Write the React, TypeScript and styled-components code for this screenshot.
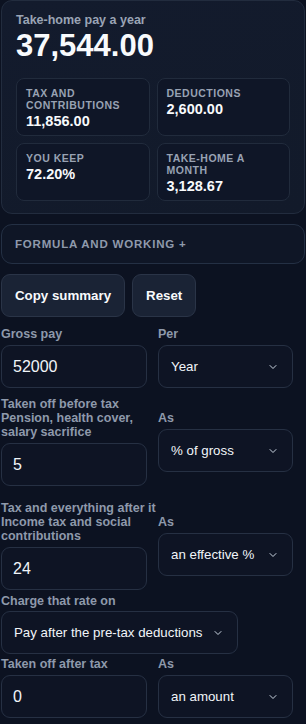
import React from 'react'
import styled, { createGlobalStyle } from 'styled-components'
import { ChevronDown } from 'lucide-react'

const GlobalStyle = createGlobalStyle`
  html, body {
    margin: 0;
    padding: 0;
    background: #0c1221;
  }
  body {
    font-family: "Liberation Sans", Arial, sans-serif;
    color: #f1f5f9;
  }
`

const stats = [
  { label: 'Tax and contributions', value: '11,856.00' },
  { label: 'Deductions', value: '2,600.00' },
  { label: 'You keep', value: '72.20%' },
  { label: 'Take-home a month', value: '3,128.67' },
]

const Select = ({ options, wide }: { options: string[]; wide?: boolean }) => (
  <SelectWrap $wide={wide}>
    <NativeSelect defaultValue={options[0]}>
      {options.map((o) => (
        <option key={o}>{o}</option>
      ))}
    </NativeSelect>
    <Chevron>
      <ChevronDown size={12} strokeWidth={2} />
    </Chevron>
  </SelectWrap>
)

const App = () => {
  return (
    <Page>
      <GlobalStyle />
      <Summary>
        <SummaryTitle>Take-home pay a year</SummaryTitle>
        <BigNumber>37,544.00</BigNumber>
        <StatGrid>
          {stats.map((s) => (
            <Stat key={s.label}>
              <StatLabel>{s.label}</StatLabel>
              <StatValue>{s.value}</StatValue>
            </Stat>
          ))}
        </StatGrid>
      </Summary>

      <Formula>Formula and working +</Formula>

      <Actions>
        <Button>Copy summary</Button>
        <Button>Reset</Button>
      </Actions>

      <Row $top={10}>
        <Field>
          <Label>Gross pay</Label>
          <Input defaultValue="52000" />
        </Field>
        <Field>
          <Label>Per</Label>
          <Select options={['Year', 'Month', 'Week', 'Hour']} />
        </Field>
      </Row>

      <Row $top={9}>
        <Field>
          <Label>
            <Title>Taken off before tax</Title>
            Pension, health cover, salary sacrifice
          </Label>
          <Input defaultValue="5" />
        </Field>
        <Field>
          <Label>As</Label>
          <Select options={['% of gross', 'an amount']} />
        </Field>
      </Row>

      <Row $top={15}>
        <Field>
          <Label>
            <Title>Tax and everything after it</Title>
            Income tax and social contributions
          </Label>
          <Input defaultValue="24" />
        </Field>
        <Field>
          <Label>As</Label>
          <Select options={['an effective %', 'an amount']} />
        </Field>
      </Row>

      <Single $top={4}>
        <Label>Charge that rate on</Label>
        <Select wide options={['Pay after the pre-tax deductions', 'Gross pay']} />
      </Single>

      <Row $top={3}>
        <Field>
          <Label>Taken off after tax</Label>
          <Input defaultValue="0" />
        </Field>
        <Field>
          <Label>As</Label>
          <Select options={['an amount', '% of gross']} />
        </Field>
      </Row>
    </Page>
  )
}
export default App

const Page = styled.div`
  padding: 0 1px 8px;
`

const Summary = styled.section`
  box-sizing: border-box;
  width: 304px;
  padding: 11px 14px 12px;
  border: 1px solid #222c3e;
  border-radius: 11px;
  background: linear-gradient(160deg, #131b2d 0%, #121a2a 100%);
`

const SummaryTitle = styled.div`
  font-size: 12.5px;
  line-height: 16px;
  font-weight: 700;
  color: #9aa4b5;
`

const BigNumber = styled.div`
  margin-top: 1px;
  font-size: 31px;
  line-height: 34px;
  font-weight: 700;
  color: #f8fafc;
`

const StatGrid = styled.div`
  display: grid;
  grid-template-columns: 1fr 1fr;
  gap: 7px;
  margin-top: 15px;
`

const Stat = styled.div`
  box-sizing: border-box;
  min-height: 58px;
  padding: 8px 9px 5px;
  border: 1px solid #212b3c;
  border-radius: 8px;
  background: #0f1627;
`

const StatLabel = styled.div`
  font-size: 10.5px;
  line-height: 12px;
  font-weight: 700;
  letter-spacing: 0.5px;
  text-transform: uppercase;
  color: #98a2b3;
`

const StatValue = styled.div`
  margin-top: 2px;
  font-size: 14.5px;
  line-height: 17px;
  font-weight: 700;
  color: #f8fafc;
`

const Formula = styled.div`
  box-sizing: border-box;
  height: 40px;
  margin-top: 10px;
  padding: 0 13px;
  display: flex;
  align-items: center;
  border: 1px solid #243044;
  border-radius: 11px;
  background: #0f1626;
  font-size: 11.5px;
  font-weight: 700;
  letter-spacing: 0.8px;
  text-transform: uppercase;
  color: #8f9aac;
`

const Actions = styled.div`
  display: flex;
  gap: 7px;
  margin-top: 10px;
`

const Button = styled.button`
  box-sizing: border-box;
  height: 43px;
  padding: 0 13px;
  border: 1px solid #2a3447;
  border-radius: 9px;
  background: #1a2335;
  color: #f8fafc;
  font-family: inherit;
  font-size: 13.3px;
  font-weight: 700;
`

const Row = styled.div<{ $top: number }>`
  display: grid;
  grid-template-columns: 146px 135px;
  column-gap: 11px;
  align-items: center;
  margin-top: ${(p) => p.$top}px;
`

const Single = styled.div<{ $top: number }>`
  display: flex;
  flex-direction: column;
  align-items: flex-start;
  gap: 3px;
  margin-top: ${(p) => p.$top}px;
`

const Field = styled.div`
  display: flex;
  flex-direction: column;
  gap: 4px;
`

const Label = styled.label`
  font-size: 12.5px;
  line-height: 14px;
  font-weight: 700;
  color: #8e99ab;
`

const Title = styled.span`
  display: block;
  white-space: nowrap;
`

const Input = styled.input`
  box-sizing: border-box;
  width: 100%;
  height: 43px;
  padding: 0 11px;
  border: 1px solid #263043;
  border-radius: 9px;
  background: #0e1424;
  color: #f1f5f9;
  font-family: inherit;
  font-size: 16px;
  outline: none;
`

const SelectWrap = styled.div<{ $wide?: boolean }>`
  position: relative;
  width: ${(p) => (p.$wide ? 'auto' : '100%')};
`

const NativeSelect = styled.select`
  box-sizing: border-box;
  width: 100%;
  height: 43px;
  padding: 0 34px 0 12px;
  border: 1px solid #263043;
  border-radius: 9px;
  background: #0e1424;
  color: #f1f5f9;
  font-family: inherit;
  font-size: 13.3px;
  appearance: none;
  -webkit-appearance: none;
  outline: none;
`

const Chevron = styled.span`
  position: absolute;
  right: 14px;
  top: 50%;
  transform: translateY(-50%);
  display: flex;
  color: #cbd5e1;
  pointer-events: none;
`
